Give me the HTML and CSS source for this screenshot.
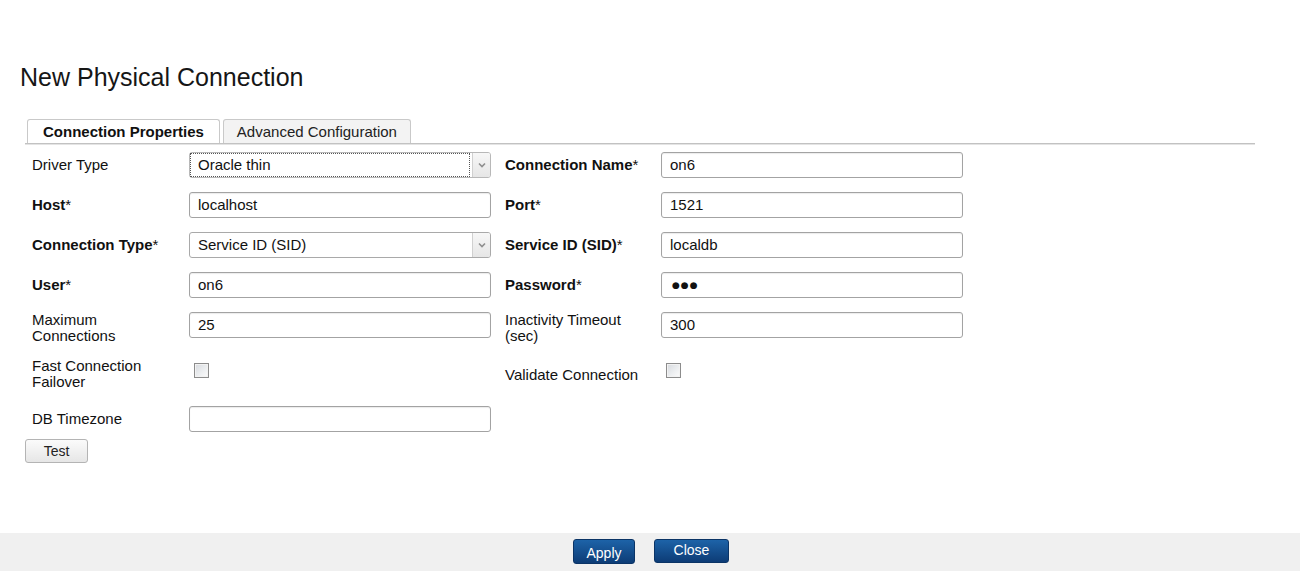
FILE: index.html
```html
<!DOCTYPE html>
<html>
<head>
<meta charset="utf-8">
<title>New Physical Connection</title>
<link rel="stylesheet" href="styles.css">
</head>
<body>
<div class="main">
  <h1 class="title">New Physical Connection</h1>
  <div class="tabbar">
    <div class="tab active">Connection Properties</div>
    <div class="tab">Advanced Configuration</div>
  </div>
  <div class="form">
    <div class="lbl">Driver Type</div>
    <div class="select focused"><span class="sel-text">Oracle thin</span><span class="sel-arrow"><svg width="8" height="6" viewBox="0 0 8 6"><path d="M1 1.5 L4 4.5 L7 1.5" fill="none" stroke="#8f8f8f" stroke-width="1.6"/></svg></span></div>
    <div class="lbl lbl2"><b>Connection Name</b>*</div>
    <div class="input">on6</div>

    <div class="lbl"><b>Host</b>*</div>
    <div class="input">localhost</div>
    <div class="lbl lbl2"><b>Port</b>*</div>
    <div class="input">1521</div>

    <div class="lbl"><b>Connection Type</b>*</div>
    <div class="select"><span class="sel-text">Service ID (SID)</span><span class="sel-arrow"><svg width="8" height="6" viewBox="0 0 8 6"><path d="M1 1.5 L4 4.5 L7 1.5" fill="none" stroke="#8f8f8f" stroke-width="1.6"/></svg></span></div>
    <div class="lbl lbl2"><b>Service ID (SID)</b>*</div>
    <div class="input">localdb</div>

    <div class="lbl"><b>User</b>*</div>
    <div class="input">on6</div>
    <div class="lbl lbl2"><b>Password</b>*</div>
    <div class="input pw">●●●</div>

    <div class="lbl top">Maximum<br>Connections</div>
    <div class="input top">25</div>
    <div class="lbl lbl2 top">Inactivity Timeout<br>(sec)</div>
    <div class="input top">300</div>

    <div class="lbl top">Fast Connection<br>Failover</div>
    <div class="check-cell"><span class="checkbox"></span></div>
    <div class="lbl lbl2">Validate Connection</div>
    <div class="check-cell"><span class="checkbox"></span></div>

    <div class="lbl">DB Timezone</div>
    <div class="input"></div>
  </div>
  <button class="btn-test">Test</button>
</div>
<div class="footer">
  <button class="btn-primary apply">Apply</button>
  <button class="btn-primary close">Close</button>
</div>
</body>
</html>
```

FILE: styles.css
```css
html, body {
  margin: 0;
  padding: 0;
}
body {
  width: 1300px;
  height: 571px;
  display: flex;
  flex-direction: column;
  font-family: "Liberation Sans", Arial, sans-serif;
  font-size: 15px;
  color: #111;
  background: #fff;
  overflow: hidden;
}
.main {
  flex: 1;
  display: flex;
  flex-direction: column;
  align-items: flex-start;
}
.title {
  margin: 63px 0 0 20px;
  font-size: 25px;
  line-height: 28px;
  font-weight: normal;
  color: #161616;
}
.tabbar {
  margin: 28px 0 0 25px;
  padding-left: 2px;
  width: 1228px;
  display: flex;
  gap: 3px;
  border-bottom: 1px solid #c2c2c2;
  box-shadow: 0 1px 0 #e4e4e4;
}
.tab {
  height: 23px;
  line-height: 23px;
  padding: 0 13px;
  border: 1px solid #c9c9c9;
  border-bottom: none;
  border-radius: 3px 3px 0 0;
  background: #f3f3f3;
  color: #222;
  font-size: 15px;
}
.tab.active {
  background: #fff;
  font-weight: bold;
  color: #111;
  padding: 0 15px;
}
.form {
  margin: 8px 0 0 32px;
  display: grid;
  grid-template-columns: 157px 302px 170px 302px;
  grid-template-rows: 26px 26px 26px 26px 32px 34px 26px;
  row-gap: 14px;
  align-items: center;
}
.lbl {
  line-height: 16px;
  color: #111;
}
.lbl b {
  font-weight: bold;
}
.lbl2 {
  padding-left: 14px;
}
.top {
  align-self: start;
}
.input {
  box-sizing: border-box;
  height: 26px;
  border: 1px solid #a3a3a3;
  border-radius: 3px;
  box-shadow: inset 0 1px 1px rgba(0,0,0,0.08);
  padding: 0 8px;
  line-height: 24px;
  color: #111;
  background: #fff;
}
.input.pw {
  font-family: "DejaVu Sans", sans-serif;
  font-size: 9px;
  letter-spacing: 1px;
  padding-left: 10px;
}
.select {
  box-sizing: border-box;
  height: 26px;
  border: 1px solid #a9a9a9;
  border-radius: 3px;
  display: flex;
  background: #fff;
}
.sel-text {
  flex: 1;
  padding: 0 8px;
  line-height: 24px;
  color: #111;
}
.select.focused {
  border: 1px solid #b8b8b8;
}
.select.focused .sel-text {
  outline: 1px dotted #555;
  outline-offset: -1px;
  margin: 0 2px 0 0;
  padding-left: 8px;
}
.sel-arrow {
  width: 17px;
  display: flex;
  align-items: center;
  justify-content: center;
  background: linear-gradient(#f7f7f7, #e6e6e6);
  border-left: 1px solid #d0d0d0;
  border-radius: 0 2px 2px 0;
}
.check-cell {
  align-self: start;
  padding: 5px 0 0 5px;
}
.checkbox {
  display: block;
  box-sizing: border-box;
  width: 15px;
  height: 15px;
  border: 1px solid #8c8c8c;
  background: linear-gradient(135deg, #d6d9de 0%, #eceef0 55%, #fbfbfb 100%);
  box-shadow: inset 0 0 0 1px #f2f2f2;
}
.btn-test {
  margin: 7px 0 0 25px;
  width: 63px;
  height: 24px;
  padding: 0;
  border: 1px solid #b4b4b4;
  border-radius: 3px;
  background: linear-gradient(#fbfbfb, #e6e6e6);
  font-family: "Liberation Sans", Arial, sans-serif;
  font-size: 14px;
  color: #222;
}
.footer {
  height: 38px;
  background: #f0f0f0;
  display: flex;
  justify-content: center;
  align-items: flex-start;
  gap: 19px;
  padding: 6px 0 0 2px;
  box-sizing: border-box;
}
.btn-primary {
  height: 25px;
  padding: 0;
  border: 1px solid #0b3466;
  border-radius: 3px;
  background: linear-gradient(#1d63a8, #0d3c76);
  color: #fff;
  font-family: "Liberation Sans", Arial, sans-serif;
  font-size: 14px;
}
.apply {
  width: 62px;
  padding-top: 3px;
}
.close {
  width: 75px;
  height: 24px;
  padding-bottom: 2px;
}
```
